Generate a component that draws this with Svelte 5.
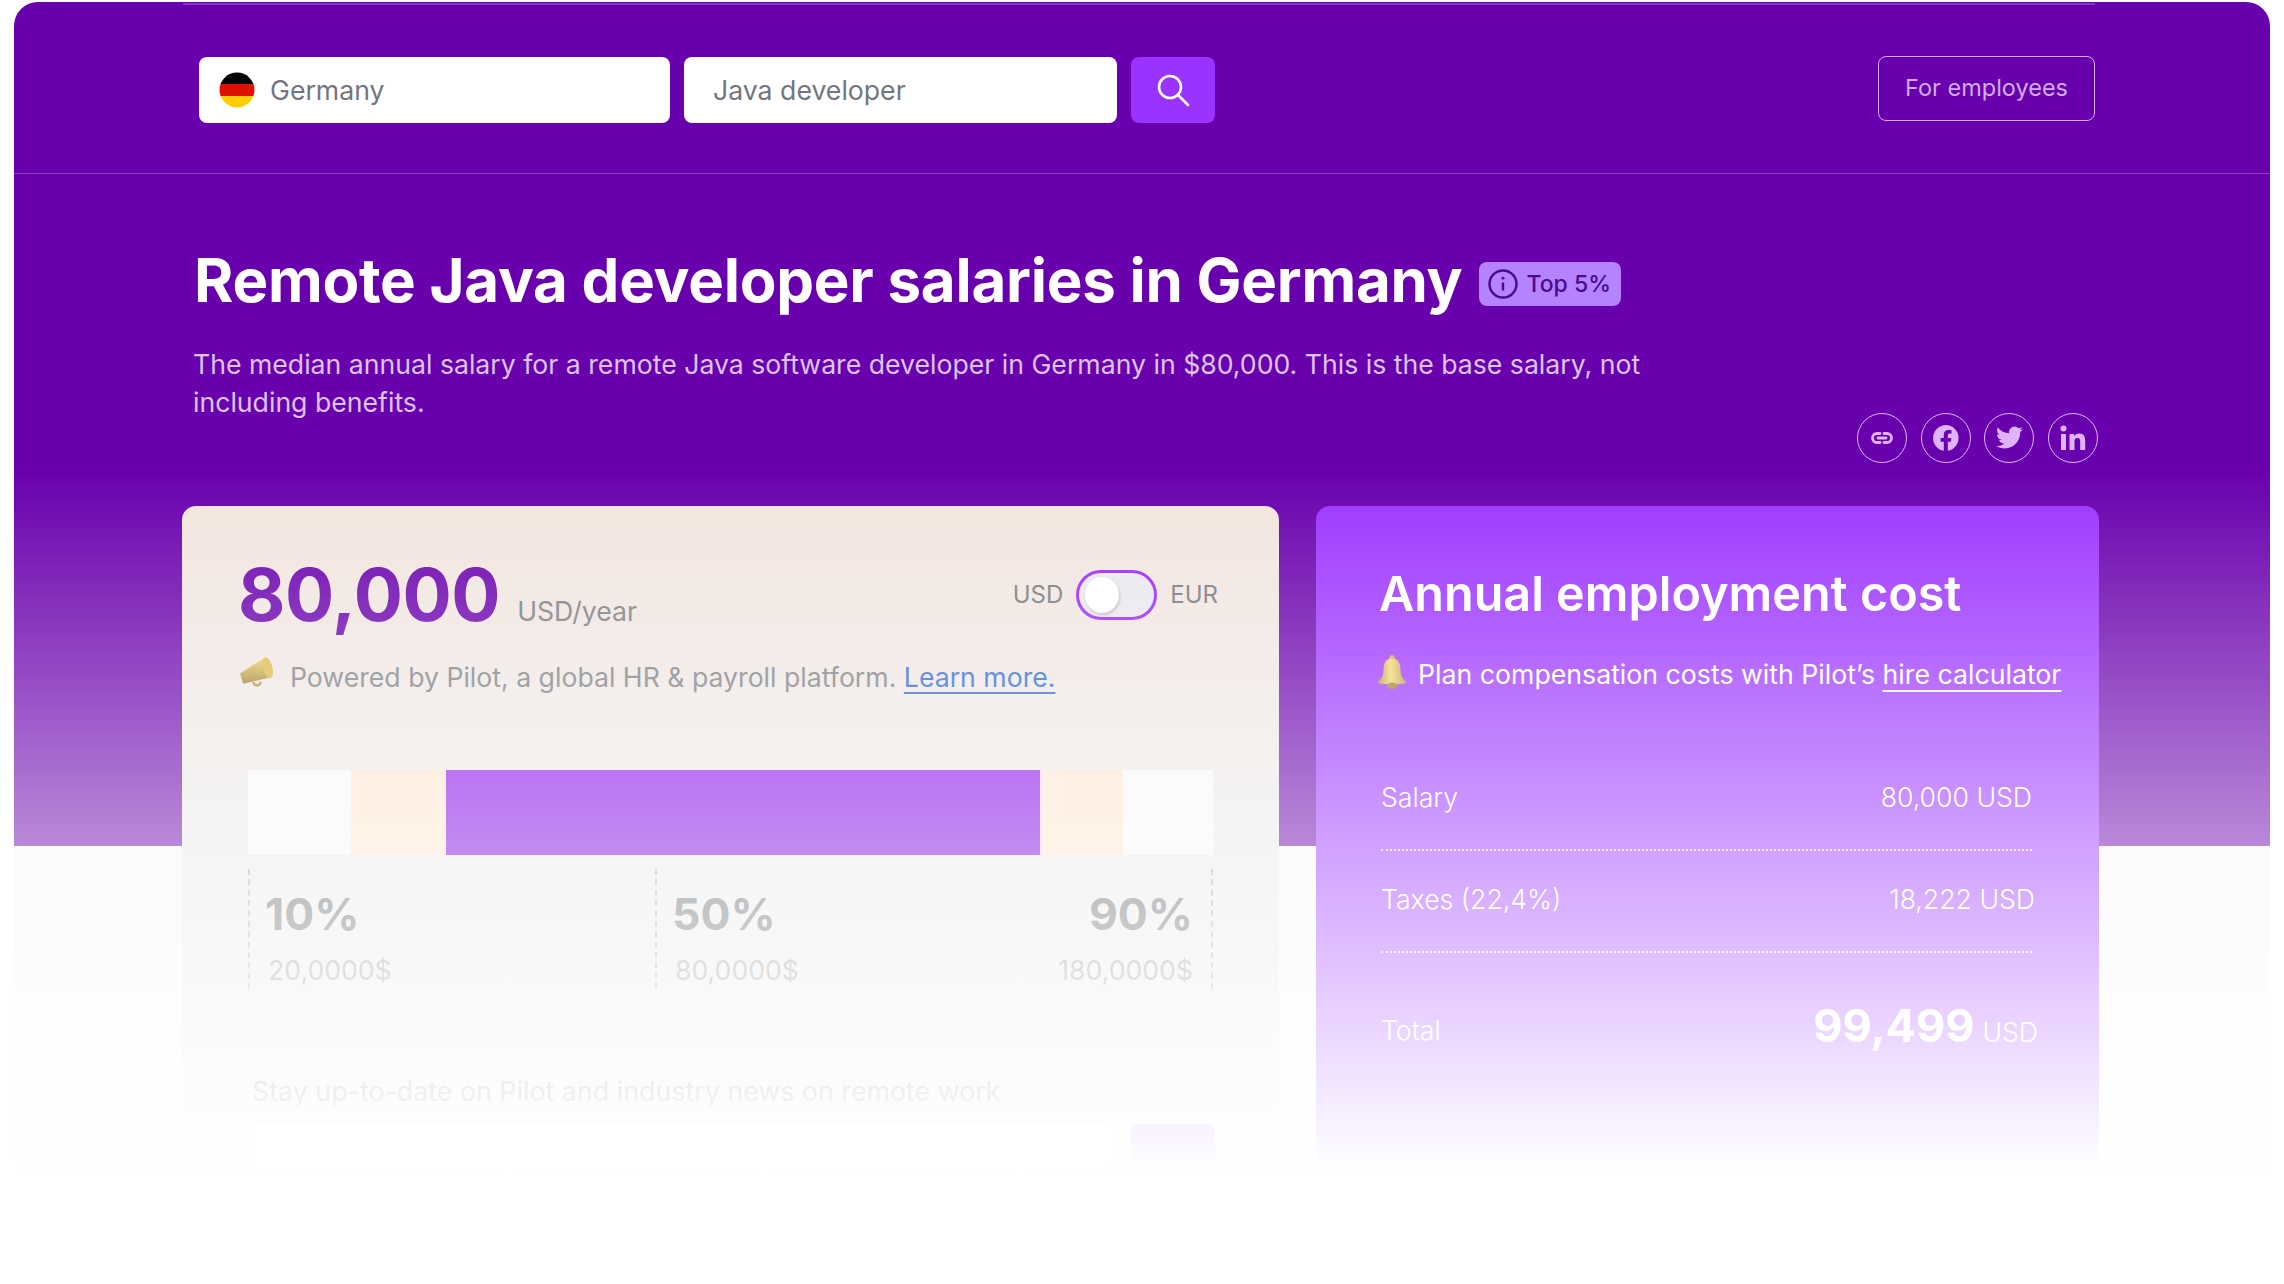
<script>
  const rows = [
    { label: 'Salary', value: '80,000 USD', cls: '' },
    { label: 'Taxes (22,4%)', value: '18,222 USD', cls: 'nudge' }
  ];
  const stats = [
    { pct: '10%', amount: '20,0000$', cls: 'first' },
    { pct: '50%', amount: '80,0000$', cls: 'mid' },
    { pct: '90%', amount: '180,0000$', cls: 'last' }
  ];
</script>

<div class="page">
  <div class="frame">
    <header class="top">
      <div class="top-inner">
        <div class="search">
          <div class="field country">
            <svg class="flag" viewBox="0 0 36 36" width="36" height="36">
              <defs><clipPath id="flagclip"><circle cx="18" cy="18" r="17.5" /></clipPath></defs>
              <g clip-path="url(#flagclip)">
                <rect width="36" height="12" fill="#050505" />
                <rect y="12" width="36" height="12" fill="#dd1100" />
                <rect y="24" width="36" height="12" fill="#ffce00" />
              </g>
            </svg>
            <span>Germany</span>
          </div>
          <div class="field role"><span>Java developer</span></div>
          <button class="search-btn" aria-label="Search">
            <svg viewBox="0 0 34 34" width="34" height="34" fill="none" stroke="#fff" stroke-width="2.6" stroke-linecap="round">
              <circle cx="14" cy="14" r="11" />
              <path d="M22 22l10 10" />
            </svg>
          </button>
        </div>
        <button class="employees">For employees</button>
      </div>
    </header>

    <section class="hero">
      <div class="title-row">
        <h1>Remote Java developer salaries in Germany</h1>
        <span class="badge">
          <svg viewBox="0 0 30 30" width="30" height="30" fill="none" stroke="#4a0a8f" stroke-width="2.4">
            <circle cx="15" cy="15" r="13.5" />
            <path d="M15 13.5v8" />
            <path d="M15 8v2.4" stroke-width="2.8" />
          </svg>
          Top 5%
        </span>
      </div>
      <p class="lead">The median annual salary for a remote Java software developer in Germany in $80,000. This is the base salary, not including benefits.</p>
      <div class="social">
        <span class="circle">
          <svg viewBox="0 0 24 24" width="24" height="24" fill="none" stroke="#dfb3ff" stroke-width="2.8" stroke-linecap="round">
            <path d="M10 7.5H7a4.5 4.5 0 0 0 0 9h3M14 7.5h3a4.5 4.5 0 0 1 0 9h-3M8 12h8" />
          </svg>
        </span>
        <span class="circle">
          <svg viewBox="0 0 28 28" width="28" height="28">
            <path fill="#dfb3ff" d="M14 1a13 13 0 0 0-2.2 25.8v-9H8.6V14h3.2v-2.9c0-3.2 1.9-5 4.8-5 1.4 0 2.9.3 2.9.3v3.2h-1.6c-1.6 0-2.1 1-2.1 2V14h3.6l-.6 3.8h-3V26.800A13 13 0 0 0 14 1z" />
          </svg>
        </span>
        <span class="circle">
          <svg viewBox="0 0 24 24" width="27" height="27">
            <path fill="#dfb3ff" d="M23.950 4.570a10 10 0 0 1-2.830.775 4.930 4.930 0 0 0 2.160-2.720c-.950.555-2 .960-3.130 1.190a4.920 4.920 0 0 0-8.380 4.480A13.980 13.980 0 0 1 1.640 3.160a4.900 4.900 0 0 0-.670 2.480c0 1.710.870 3.210 2.190 4.100a4.900 4.900 0 0 1-2.230-.616v.060a4.920 4.920 0 0 0 3.950 4.830 4.900 4.900 0 0 1-2.220.084 4.940 4.940 0 0 0 4.600 3.420A9.870 9.870 0 0 1 0 19.540a13.940 13.940 0 0 0 7.550 2.210c9.050 0 14-7.500 14-13.980 0-.210 0-.420-.015-.630A9.940 9.940 0 0 0 24 4.590z" />
          </svg>
        </span>
        <span class="circle">
          <svg viewBox="0 0 28 28" width="28" height="28">
            <circle cx="4.500" cy="4.500" r="3" fill="#dfb3ff" />
            <rect x="2" y="10" width="5" height="16" fill="#dfb3ff" />
            <path fill="#dfb3ff" d="M10.500 10h4.700v2.300c.8-1.500 2.600-2.700 5-2.700 5 0 6 3.200 6 7.400V26h-5v-8c0-2-.3-4-2.800-4s-2.900 2-2.900 3.900V26h-5z" />
          </svg>
        </span>
      </div>
    </section>

    <section class="cards">
      <article class="card salary">
        <div class="price-row">
          <div class="price"><strong>80,000</strong><span>USD/year</span></div>
          <div class="currency">
            <span>USD</span>
            <span class="toggle"><i></i></span>
            <span>EUR</span>
          </div>
        </div>
        <p class="powered">
          <svg viewBox="0 0 36 32" width="37" height="33">
            <defs>
              <linearGradient id="gold" x1="0" y1="0" x2="0" y2="1">
                <stop offset="0" stop-color="#f2d060" />
                <stop offset="1" stop-color="#9c7c30" />
              </linearGradient>
            </defs>
            <path fill="url(#gold)" d="M1 16 24 1l6 19-26 6z" />
            <ellipse cx="28" cy="10.500" rx="4.500" ry="10.500" transform="rotate(-14 28 10.500)" fill="#dcb543" />
            <path fill="none" stroke="#b0903a" stroke-width="2.400" d="M14 24a3.500 3.500 0 0 0 7 0" />
          </svg>
          <span>Powered by Pilot, a global HR &amp; payroll platform. <a href="#top">Learn more.</a></span>
        </p>
        <div class="bar">
          <div class="seg white-l"></div>
          <div class="seg peach-l"></div>
          <div class="seg violet"></div>
          <div class="seg peach-r"></div>
          <div class="seg white-r"></div>
        </div>
        <div class="stats">
          {#each stats as s}
            <div class="stat {s.cls}">
              <b>{s.pct}</b>
              <span>{s.amount}</span>
            </div>
          {/each}
        </div>
        <p class="news">Stay up-to-date on Pilot and industry news on remote work</p>
        <div class="subscribe">
          <div class="sub-input"></div>
          <div class="sub-btn"></div>
        </div>
      </article>

      <article class="card cost">
        <h2>Annual employment cost</h2>
        <p class="plan">
          <svg viewBox="0 0 32 34" width="34" height="36">
            <defs>
              <linearGradient id="bell" x1="0" y1="0" x2="1" y2="0">
                <stop offset="0" stop-color="#a88a38" />
                <stop offset="0.45" stop-color="#f3d870" />
                <stop offset="1" stop-color="#b39440" />
              </linearGradient>
            </defs>
            <circle cx="16" cy="3.500" r="2.500" fill="#c8a84a" />
            <path fill="url(#bell)" d="M16 4c-6 0-8 5-8 11 0 6-3 9-6 12 4 2.500 24 2.500 28 0-3-3-6-6-6-12 0-6-2-11-8-11z" />
            <ellipse cx="16" cy="30" rx="5" ry="3" fill="#9a7f32" />
          </svg>
          <span>Plan compensation costs with Pilot’s <a href="#top">hire calculator</a></span>
        </p>
        <div class="lines">
          {#each rows as r}
            <div class="line {r.cls}"><span>{r.label}</span><span>{r.value}</span></div>
          {/each}
          <div class="line total">
            <span>Total</span>
            <span class="sum"><strong>99,499</strong><em>USD</em></span>
          </div>
        </div>
      </article>
    </section>
  </div>
  <div class="fade"></div>
</div>

<style>
  :global(body) {
    margin: 0;
    background: #fff;
    font-family: Inter, "Liberation Sans", sans-serif;
  }
  .page {
    position: relative;
    height: 1284px;
    overflow: hidden;
  }
  .frame {
    margin: 2px 14px 0 14px;
    height: 1282px;
    border-radius: 24px 24px 0 0;
    background: linear-gradient(#6900ad 844px, #f7f7f7 844px, #f7f7f7 1180px, #fff 1180px);
  }
  .fade {
    position: absolute;
    inset: 0;
    pointer-events: none;
    background: linear-gradient(rgba(255, 255, 255, 0) 470px, #fff 1170px);
  }
  .top {
    height: 171px;
    border-bottom: 1px solid rgba(255, 255, 255, 0.26);
  }
  .top-inner {
    display: flex;
    justify-content: space-between;
    align-items: flex-start;
    margin: 0 175px 0 169px;
    padding: 52px 0 0 16px;
    border-top: 2px solid rgba(255, 255, 255, 0.2);
    position: relative;
    top: 1px;
  }
  .search {
    display: flex;
    gap: 14px;
    height: 66px;
  }
  .field {
    display: flex;
    align-items: center;
    background: #fff;
    border-radius: 8px;
    font-size: 26.650px;
    color: #72767e;
    box-sizing: border-box;
  }
  .country {
    width: 471px;
    padding-left: 20px;
    gap: 15px;
  }
  .role {
    width: 433px;
    padding-left: 29px;
  }
  .search-btn {
    width: 84px;
    border: 0;
    border-radius: 8px;
    background: #9b33ff;
    display: flex;
    align-items: center;
    justify-content: center;
    padding: 0;
  }
  .employees {
    width: 217px;
    height: 65px;
    margin-top: -1px;
    border: 1.500px solid #d0aced;
    border-radius: 8px;
    background: transparent;
    color: #d0aced;
    font: 400 23.500px Inter, sans-serif;
    padding: 0 0 2px;
  }
  .hero {
    position: relative;
    padding: 66px 0 0 180px;
    height: 259px;
    box-sizing: border-box;
  }
  .title-row {
    display: flex;
    align-items: center;
    gap: 17px;
    height: 80px;
  }
  h1 {
    margin: 0;
    font: 700 60px Inter, sans-serif;
    letter-spacing: -0.25px;
    color: #fff;
    white-space: nowrap;
  }
  .badge {
    display: inline-flex;
    align-items: center;
    gap: 8px;
    width: 142px;
    height: 44px;
    box-sizing: border-box;
    padding-left: 9px;
    margin-top: 8px;
    border-radius: 8px;
    background: #b583ff;
    color: #4a0a8f;
    font-size: 23px;
    font-weight: 500;
    white-space: nowrap;
  }
  .lead {
    margin: 25px 0 0 -1px;
    width: 1480px;
    font-size: 26.650px;
    line-height: 38px;
    color: #dcc3f3;
  }
  .social {
    position: absolute;
    top: 238.500px;
    left: 1843px;
    display: flex;
    gap: 13.500px;
  }
  .circle {
    width: 50px;
    height: 50px;
    box-sizing: border-box;
    border: 1.500px solid #dcb6fa;
    border-radius: 50%;
    display: flex;
    align-items: center;
    justify-content: center;
  }
  .cards {
    display: flex;
    gap: 37px;
    margin: 72.600px 0 0 168px;
  }
  .card {
    border-radius: 14px;
    height: 680px;
    box-sizing: border-box;
  }
  .salary {
    width: 1097px;
    padding: 48px 61px 0 57px;
    background: linear-gradient(#f3e4dd, #ebe9e9 52%);
  }
  .price-row {
    display: flex;
    justify-content: space-between;
    align-items: center;
    height: 82px;
  }
  .price {
    display: flex;
    align-items: baseline;
    gap: 17px;
    margin-left: -1px;
  }
  .price strong {
    font: 700 73px Inter, sans-serif;
    color: #6900ad;
    line-height: 80px;
    letter-spacing: -0.4px;
  }
  .price span {
    font-size: 26.650px;
    color: #787b80;
  }
  .currency {
    display: flex;
    align-items: center;
    gap: 13px;
    font-size: 24px;
    color: #74777c;
  }
  .toggle {
    width: 81px;
    height: 50px;
    box-sizing: border-box;
    border: 3px solid #9b20ff;
    border-radius: 25px;
    background: #e9e8ed;
    display: flex;
    align-items: center;
    padding-left: 6px;
  }
  .toggle i {
    display: block;
    width: 34px;
    height: 36px;
    border-radius: 50%;
    background: #fff;
    box-shadow: 1px 2px 3px rgba(120, 60, 100, 0.3);
  }
  .powered {
    display: flex;
    align-items: center;
    gap: 14px;
    height: 38px;
    margin: 22px 0 0;
    font-size: 26.650px;
    color: #787b80;
    white-space: nowrap;
  }
  .powered svg { flex: none; margin-top: -6px; }
  .powered a {
    color: #2563d8;
    text-decoration: underline;
    text-underline-offset: 5px;
    text-decoration-thickness: 2px;
  }
  .bar {
    display: flex;
    width: 965px;
    height: 85px;
    margin: 74px 0 0 9px;
  }
  .white-l { width: 103px; background: #faf8f8; }
  .peach-l { width: 95px; background: #ffe5cf; }
  .violet {
    width: 596px;
    background: linear-gradient(#8a0cec, #7a00de);
    border-right: 2px solid #e8d8ff;
    box-sizing: border-box;
  }
  .peach-r { width: 81px; background: #ffe5cf; }
  .white-r { width: 90px; background: #faf8f8; }
  .stats {
    display: grid;
    grid-template-columns: 407px 300px 258px;
    width: 965px;
    height: 120px;
    margin: 14px 0 0 9px;
  }
  .stat {
    display: flex;
    flex-direction: column;
    box-sizing: border-box;
    padding: 17px 0 0 18px;
    gap: 12px;
  }
  .stat b {
    font: 700 44.500px/56px Inter, sans-serif;
    color: #5f6368;
    margin-left: -3px;
  }
  .stat span {
    font-size: 26.650px;
    line-height: 32px;
    color: #91939c;
  }
  .first, .mid {
    border-left: 2px dashed #aaa;
  }
  .last {
    border-right: 2px dashed #aaa;
    padding-right: 18px;
    text-align: right;
  }
  .news {
    margin: 84px 0 0 13px;
    font-size: 26.800px;
    line-height: 36px;
    color: #72727a;
    white-space: nowrap;
  }
  .subscribe {
    display: flex;
    justify-content: space-between;
    margin: 15px 0 0 14px;
    height: 44px;
    width: 962px;
  }
  .sub-input {
    width: 860px;
    background: #fff;
    border-radius: 8px;
  }
  .sub-btn {
    width: 84px;
    background: #9b33ff;
    border-radius: 8px;
  }
  .cost {
    width: 783px;
    padding: 54px 67px 0 63px;
    background: #9b33ff;
    color: #fff;
  }
  h2 {
    margin: 0;
    font: 600 48.500px/68px Inter, sans-serif;
    white-space: nowrap;
  }
  .plan {
    display: flex;
    align-items: center;
    gap: 9px;
    margin: 28px 0 0 -4px;
    font-size: 26.700px;
    line-height: 36px;
    white-space: nowrap;
  }
  .plan svg { flex: none; margin-top: -4px; }
  .plan a {
    color: #fff;
    text-decoration: underline;
    text-underline-offset: 6px;
    text-decoration-thickness: 2px;
  }
  .lines {
    margin-top: 57px;
    font-size: 26.650px;
    font-weight: 300;
    padding-left: 2px;
  }
  .line {
    display: flex;
    justify-content: space-between;
    align-items: center;
    height: 102px;
    padding-bottom: 4px;
    box-sizing: border-box;
    border-bottom: 2px dotted rgba(255, 255, 255, 0.75);
  }
  .line.nudge span:last-child {
    margin-right: -3px;
  }
  .line.total {
    border: 0;
    height: 108px;
    padding: 46px 0 0;
  }
  .sum {
    display: flex;
    align-items: baseline;
    gap: 8px;
    margin: -8px -6px 0 0;
  }
  .sum strong {
    font: 700 45px/56px Inter, sans-serif;
  }
  .sum em {
    font-style: normal;
  }
</style>
